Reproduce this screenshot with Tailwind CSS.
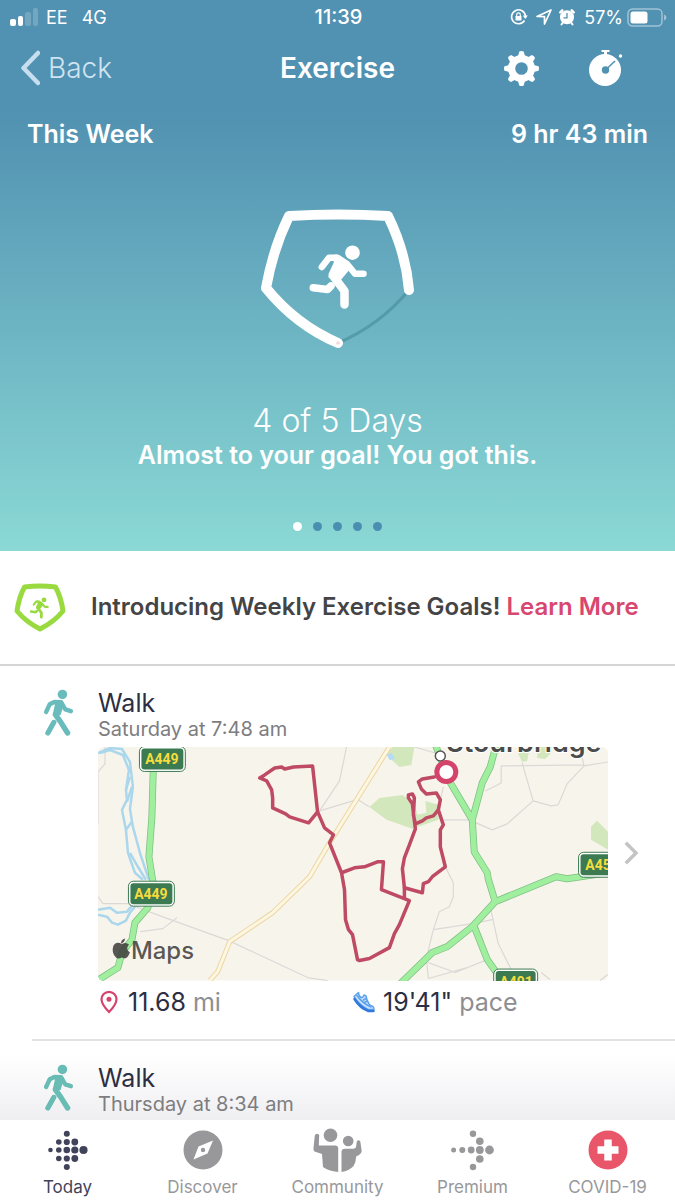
<!DOCTYPE html>
<html lang="en">
<head>
    <meta charset="UTF-8">
    <meta name="viewport" content="width=device-width, initial-scale=1.0">
    <title>Exercise</title>
    <script src="https://cdn.jsdelivr.net/npm/@tailwindcss/browser@4"></script>
</head>
<body class="min-h-screen flex flex-col bg-white font-['Inter',sans-serif] text-[#2c2e42] overflow-x-hidden">

    <!-- Shared shapes -->
    <svg class="hidden" aria-hidden="true">
        <symbol id="runner" viewBox="0 0 60 66">
            <circle cx="43.500" cy="8.700" r="7.300" fill="currentColor"/>
            <path d="M20 11.500 28 10.500 38 18 41 25 31 37 26 38 19.500 33.500 19.500 30 25 18Z" fill="currentColor"/>
            <g fill="none" stroke="currentColor" stroke-linecap="round" stroke-linejoin="round">
                <path d="M12.800 23 20 13.800H28.500L38 20 46 29.800H54.500" stroke-width="6.500"/>
                <path d="M4.300 43.800 18.500 45.500 22 42" stroke-width="7.500"/>
                <path d="M25 33 35.500 47V60.500" stroke-width="8.500"/>
            </g>
        </symbol>
        <symbol id="walker" viewBox="0 0 30 48">
            <circle cx="18.800" cy="7" r="4.600" fill="currentColor"/>
            <path d="M10 13 17 12.500 20.500 15.500 17 27 11 28 9.500 26 11.500 17Z" fill="currentColor"/>
            <g fill="none" stroke="currentColor" stroke-linecap="round" stroke-linejoin="round">
                <path d="M3 24 6.500 16.500 11 14.300 17.500 14.500 21.500 21.500 27 23.200" stroke-width="4.200"/>
                <path d="M12 26.500 17 33.500 23.800 44.300" stroke-width="5.200"/>
                <path d="M10.500 34 4.700 44.300" stroke-width="5"/>
            </g>
        </symbol>
    </svg>

    <header class="h-[551px] flex flex-col text-white bg-linear-to-b from-[#5191b1] from-20% to-[#8bd9d5]">
        <!-- Status bar -->
        <div class="h-[34px] grid grid-cols-3 items-center pl-[10px] pr-2 text-[18px]">
            <div class="flex items-center gap-2">
                <svg class="w-7 h-[18px]" viewBox="0 0 28 18" fill="#fff">
                    <rect x="0" y="11" width="6" height="7" rx="2"/>
                    <rect x="8" y="8" width="5" height="10" rx="2"/>
                    <rect x="15" y="4" width="6" height="14" rx="2" opacity=".2"/>
                    <rect x="23" y="0" width="5" height="18" rx="2" opacity=".2"/>
                </svg>
                <span>EE</span>
                <span class="pl-[6px]">4G</span>
            </div>
            <span class="text-center text-[20px] font-medium">11:39</span>
            <div class="flex items-center justify-end gap-1">
                <svg class="w-[18px] h-[18px] mr-1" viewBox="0 0 18 18" fill="none" stroke="#fff" stroke-width="1.600">
                    <path d="M14.500 12.500A7 7 0 1 1 15.500 8"/>
                    <path d="M12.800 7.500h5L15.300 11z" fill="#fff" stroke="none"/>
                    <rect x="5.500" y="8" width="6" height="4.500" rx=".6" fill="#fff" stroke="none"/>
                    <path d="M6.700 8V6.700a1.800 1.800 0 0 1 3.600 0V8" stroke-width="1.200"/>
                </svg>
                <svg class="w-4 h-4 mr-0.5" viewBox="0 0 16 16" fill="none" stroke="#fff" stroke-width="1.700" stroke-linejoin="round">
                    <path d="M1 7.500 15 1 8.500 15V7.700z"/>
                </svg>
                <svg class="w-[18px] h-[18px] mr-1" viewBox="0 0 18 18">
                    <circle cx="9" cy="9.200" r="7" fill="#fff"/>
                    <path d="M2.300 4.300 4.300 2.300M15.700 4.300 13.700 2.300" stroke="#fff" stroke-width="2.500" stroke-linecap="round"/>
                    <path d="M4.500 15 3.500 16.500M13.500 15 14.500 16.500" stroke="#fff" stroke-width="2" stroke-linecap="round"/>
                    <path d="M9 5v4.800H5.500" fill="none" stroke="#5191b1" stroke-width="1.300"/>
                </svg>
                <span>57%</span>
                <svg class="w-10 h-[19px]" viewBox="0 0 40 19">
                    <rect x="1" y="1" width="34" height="17" rx="4.500" fill="none" stroke="#fff" stroke-opacity=".45" stroke-width="1.500"/>
                    <rect x="3.500" y="3.500" width="17" height="12" rx="2.500" fill="#fff"/>
                    <path d="M37 6.500q2.500 1 2.500 3t-2.500 3z" fill="#fff" opacity=".45"/>
                </svg>
            </div>
        </div>

        <!-- Title bar -->
        <div class="h-[68px] grid grid-cols-3 items-center px-5 text-[28px]">
            <a href="#" class="flex items-center gap-2 font-light text-[#cfe4f1]">
                <svg class="w-5 h-9" viewBox="0 0 20 36" fill="none" stroke="#c6deee" stroke-width="4.500" stroke-linecap="round" stroke-linejoin="round">
                    <path d="M18 3 3.500 18 18 33"/>
                </svg>
                Back
            </a>
            <h1 class="text-center font-semibold">Exercise</h1>
            <div class="flex justify-end gap-[50px] pr-8">
                <button type="button" aria-label="Settings">
                    <svg class="w-[35px] h-[35px]" viewBox="-17.500 -17.500 35 35" fill="#fff">
                        <path d="M-3.600-12-2.200-17Q0-18 2.200-17L3.600-12V12L2.200 17Q0 18-2.200 17L-3.600 12Z"/>
                        <path d="M-3.600-12-2.200-17Q0-18 2.200-17L3.600-12V12L2.200 17Q0 18-2.200 17L-3.600 12Z" transform="rotate(45)"/>
                        <path d="M-3.600-12-2.200-17Q0-18 2.200-17L3.600-12V12L2.200 17Q0 18-2.200 17L-3.600 12Z" transform="rotate(90)"/>
                        <path d="M-3.600-12-2.200-17Q0-18 2.200-17L3.600-12V12L2.200 17Q0 18-2.200 17L-3.600 12Z" transform="rotate(135)"/>
                        <circle r="13.500"/>
                        <circle r="6.300" fill="#5191b1"/>
                    </svg>
                </button>
                <button type="button" aria-label="Stopwatch">
                    <svg class="w-[34px] h-9" viewBox="0 0 34 36">
                        <circle cx="16" cy="20" r="16" fill="#fff"/>
                        <path d="M12.500 0h8v2h-2.500v3h-3V2h-2.500z" fill="#fff"/>
                        <circle cx="31.500" cy="6" r="1.700" fill="#fff"/>
                        <circle cx="16.500" cy="20" r="3.700" fill="#5191b1"/>
                        <path d="M17 19.500 26 11" stroke="#5191b1" stroke-width="1.500"/>
                    </svg>
                </button>
            </div>
        </div>

        <div class="h-[66px] flex items-center justify-between px-[27px] text-[25px] font-semibold">
            <h2>This Week</h2>
            <span>9 hr 43 min</span>
        </div>

        <!-- Weekly goal -->
        <div class="flex-1 flex flex-col items-center pt-[41px]">
            <svg class="w-[154px] h-[140px]" viewBox="0 0 154 140" fill="none" stroke-linecap="round" stroke-linejoin="round">
                <path d="M148 81Q119 116 77 134" stroke="#3f8797" stroke-opacity=".55" stroke-width="3"/>
                <path d="M148 81Q145 44 127 7 77 4 28 7 12 40 5 79 35 116 77 134" stroke="#fff" stroke-width="10"/>
                <circle cx="77" cy="134" r="1.800" fill="#f5d9da"/>
                <svg x="48" y="35" width="60" height="66"><use href="#runner"/></svg>
            </svg>
            <p class="mt-[54px] text-[32px] leading-9 font-light">4 of 5 Days</p>
            <p class="text-[25px] leading-8 font-semibold">Almost to your goal! You got this.</p>
            <div class="mt-[51px] flex gap-[11px]">
                <span class="size-[9px] rounded-full bg-white"></span>
                <span class="size-[9px] rounded-full bg-[#4a8fb2]"></span>
                <span class="size-[9px] rounded-full bg-[#4a8fb2]"></span>
                <span class="size-[9px] rounded-full bg-[#4a8fb2]"></span>
                <span class="size-[9px] rounded-full bg-[#4a8fb2]"></span>
            </div>
        </div>
    </header>

    <!-- Announcement -->
    <section class="h-[115px] flex items-center gap-[25px] px-[14px] border-b-2 border-[#d5d5d7]">
        <svg class="w-[52px] h-[50px] shrink-0 text-[#98da3f]" viewBox="0 0 52 50" fill="none">
            <path d="M10.500 4Q26 2 41.500 4 47 14 49 28 40 39 26 46 12 39 3 28 5 14 10.500 4Z" stroke="currentColor" stroke-width="5" stroke-linejoin="round"/>
            <svg x="15.500" y="14" width="20" height="22"><use href="#runner"/></svg>
        </svg>
        <p class="pb-0.5 text-[24px] font-semibold text-[#444446]">Introducing Weekly Exercise Goals! <a href="#" class="text-[#d8476f]">Learn More</a></p>
    </section>

    <main class="flex-1 flex flex-col">
        <article class="flex pl-[43px] pt-[21px] pb-[19px]">
            <svg class="w-[31px] h-[50px] shrink-0 text-[#69bcbb]"><use href="#walker"/></svg>
            <div class="flex-1 min-w-0 pl-6">
                <h3 class="text-[25px] leading-8">Walk</h3>
                <p class="text-[20px] leading-5 text-[#7d7d7f]">Saturday at 7:48 am</p>
                <!-- Route map -->
                <svg class="mt-2 w-full rounded-md" viewBox="0 0 511 234" fill="none" stroke-linejoin="round">
                    <rect width="511" height="234" fill="#f7f4ec"/>
                    <g fill="#d3e7bd">
                        <path d="M272 60 282 51 305 48 317 56 320 68 329 66 328 54 342 58 341 73 315 82 289 73Z"/>
                        <path d="M289 8 295 0H317L314 18 302 20Z"/>
                        <path d="M421 7 424 4H432L430 14 425 15ZM441 0H454V6L448 12 440 11Z"/>
                        <path d="M494 80 500 74 511 85V103L494 93Z"/>
                    </g>
                    <path d="M289 7 294 6 298 12 292 13Z" fill="#b5dcf2"/>
                    <g stroke="#dcd8d6" stroke-width="1.200">
                        <path d="M0 77V25L7 17V0M0 150 5 157H30L67 171 131 194 210 231 230 234M79 171 65 182 42 185M249 0 242 34 222 64 262 52"/>
                        <path d="M258 51 272 60M346 73H372L395 83 410 77 436 54 425 16M436 54 454 59 461 58 470 37 487 19 511 15M487 19 484 6M346 40 341 62M388 44 404 36V19L487 18M317 0 345 8"/>
                        <path d="M348 120 356 136V150L352 160 342 165 336 183 329 212 331 232M336 183 375 177 395 173M393 160 401 197 415 225M331 216 358 226 390 213M331 232 370 221M444 226 453 233M503 234 511 228"/>
                    </g>
                    <g stroke="#abd7ec" stroke-width="2.500">
                        <path d="M0 6 12 1 24 2 32 15 35 40 32 62 35 80 42 106 51 133M2 6 12 3 25 8 31 23 28 43 29 53 24 63 28 83 30 106 37 126 45 133"/>
                        <path d="M28 43 32 30M29 55 34 40M28 83 34 75M32 106 40 120 48 133"/>
                        <path d="M0 163 12 161 19 166 29 165 35 158M0 168 9 170 14 176 20 178 28 174 32 166 37 160"/>
                    </g>
                    <path d="M112 234 120 225 132 195 175 166 212 130 232 96 262 48 292 0" stroke="#ecd6a4" stroke-width="5"/>
                    <path d="M112 234 120 225 132 195 175 166 212 130 232 96 262 48 292 0" stroke="#fdf6e0" stroke-width="3"/>
                    <g stroke="#7fbf82" stroke-width="7">
                        <path d="M56 0 54 70 51 110 55 135 50 161 37 176 34 193 24 206 20 221 1 233"/>
                        <path d="M337-5 352 34 375 73 377 105 390 126 391 132 398 155 375 180 350 200 335 206 303 237M399-2 393 20 385 36 375 73M398 155 459 130 470 132 511 126M377 180 390 213 402 230"/>
                    </g>
                    <g stroke="#a0ef9f" stroke-width="5.500">
                        <path d="M56 0 54 70 51 110 55 135 50 161 37 176 34 193 24 206 20 221 1 233"/>
                        <path d="M337-5 352 34 375 73 377 105 390 126 391 132 398 155 375 180 350 200 335 206 303 237M399-2 393 20 385 36 375 73M398 155 459 130 470 132 511 126M377 180 390 213 402 230"/>
                    </g>
                    <text x="349" y="5" font-size="27" font-weight="600" fill="#4b4b4b" stroke="#fff" stroke-width="2" paint-order="stroke">Stourbridge</text>
                    <g stroke="#be4a64" stroke-width="3.500" stroke-linecap="round">
                        <path d="M162 31 167 28 177 21 184 20 187 22 196 20 215 19 220 65 211 76 192 70 188 67 175 61V51L174 43 169 34 162 31Z"/>
                        <path d="M220 65 227 81 236 88 232 96 244 126 247 143 248 173 251 183 255 188 260 213 262 214 272 212 292 201 297 187 302 178 312 154 284 143 286 115 280 115 267 120 257 121 244 126"/>
                        <path d="M307 151V141L305 122 307 111 312 98 318 82 316 66 315 57 311 51 311 48 315 47 317 51 316 68 318 77 325 74 329 71 336 69 341 63"/>
                        <path d="M307 141 325 146 326 137 331 135 335 130 348 120 343 100 343 83 346 78 341 63 343 53 339 46 329 47 324 42 321 35 325 32 337 30"/>
                    </g>
                    <circle cx="343" cy="9" r="5" fill="#fff" stroke="#555" stroke-width="1.500"/>
                    <circle cx="349" cy="25" r="9.500" fill="#fff" stroke="#d3436a" stroke-width="5"/>
                    <!-- Road signs -->
                    <g font-family="Roboto, sans-serif" font-size="14" font-weight="700" fill="#f6dc3d" text-anchor="middle">
                        <rect x="41.500" y="-.5" width="46" height="25" rx="5" fill="#fff" stroke="#3c7a51"/>
                        <rect x="43.500" y="1.500" width="42" height="21" rx="3" fill="#3c7a51"/>
                        <text x="64" y="17">A449</text>
                        <rect x="30.500" y="134.500" width="46" height="25" rx="5" fill="#fff" stroke="#3c7a51"/>
                        <rect x="32.500" y="136.500" width="42" height="21" rx="3" fill="#3c7a51"/>
                        <text x="53" y="152">A449</text>
                        <rect x="481.500" y="105.500" width="46" height="25" rx="5" fill="#fff" stroke="#3c7a51"/>
                        <rect x="483.500" y="107.500" width="42" height="21" rx="3" fill="#3c7a51"/>
                        <text x="505" y="123">A458</text>
                        <rect x="396.500" y="222.500" width="44" height="25" rx="5" fill="#fff" stroke="#3c7a51"/>
                        <rect x="398.500" y="224.500" width="40" height="21" rx="3" fill="#3c7a51"/>
                        <text x="419" y="240">A491</text>
                    </g>
                    <g fill="#3c3a38" fill-opacity=".85">
                        <path d="M24 197.500Q18 194 15.500 199 13 206 18 211 20 213 24 211 28 213 30 210L32 206Q27 203 31 198 28 195 24 197.500ZM23 197Q23 193 27 192 27 196 23 197Z"/>
                        <text x="33" y="212" font-size="24" font-weight="500">Maps</text>
                    </g>
                </svg>
                <div class="mt-[3px] grid grid-cols-2 text-[25px] leading-9">
                    <p class="flex items-center gap-2">
                        <svg class="w-[22px] h-6" viewBox="0 0 22 24" fill="none" stroke="#d5426d" stroke-width="2.200">
                            <path d="M11 22Q3.500 14.500 3.500 9.300A7.500 7.500 0 0 1 18.500 9.300Q18.500 14.500 11 22Z"/>
                            <circle cx="11" cy="9.300" r="2.500" fill="#d5426d" stroke="none"/>
                        </svg>
                        <span>11.68 <span class="text-[#8e8e91]">mi</span></span>
                    </p>
                    <p class="flex items-center gap-2">
                        <svg class="w-[22px] h-[22px]" viewBox="0 0 22 22" fill="none" stroke="#5ea2ee" stroke-width="1.500" stroke-linejoin="round" stroke-linecap="round">
                            <path d="M5.500 1.500 1 5.500Q6 14 15 18.500L21 18.500Q21 15 17.500 14.500 14.500 12 13 5L11 4Q10 7 8 6.500 5.500 5 5.500 1.500Z" fill="#cfe4fb"/>
                            <path d="M1.500 8Q7 17 15.500 20L20.500 20" stroke="#3379dc" stroke-width="2.500"/>
                            <path d="M4 4.500Q9 12 18 16M13 7.500 10.500 9M14 10 11.500 11.500"/>
                        </svg>
                        <span>19'41" <span class="text-[#8e8e91]">pace</span></span>
                    </p>
                </div>
            </div>
            <div class="w-[67px] shrink-0 self-center pl-4">
                <svg class="w-[15px] h-6" viewBox="0 0 15 24" fill="none" stroke="#c4c4c7" stroke-width="3.500" stroke-linecap="square">
                    <path d="M3 3 12 12 3 21"/>
                </svg>
            </div>
        </article>

        <article class="flex-1 bg-linear-to-b from-white from-20% to-[#efeff2]">
            <div class="ml-8 border-t-2 border-[#e2e2e4]"></div>
            <div class="flex pl-[43px] pt-[21px] pb-1">
                <svg class="w-[31px] h-[50px] shrink-0 text-[#69bcb4]"><use href="#walker"/></svg>
                <div class="pl-6">
                    <h3 class="text-[25px] leading-8">Walk</h3>
                    <p class="text-[20px] leading-5 text-[#7d7d7f]">Thursday at 8:34 am</p>
                </div>
            </div>
        </article>
    </main>

    <!-- Tab bar -->
    <nav class="sticky bottom-0 h-20 grid grid-cols-5 bg-white text-[17px] leading-6 text-[#98989b]">
        <a href="#" class="flex flex-col items-center gap-[3px] pt-2 text-[#41435a]">
            <svg class="h-11 w-11" viewBox="0 0 44 44" fill="currentColor">
                <circle cx="4.500" cy="22" r="2.300"/>
                <circle cx="12.800" cy="14" r="2.800"/><circle cx="12.800" cy="22" r="2.800"/><circle cx="12.800" cy="30.500" r="2.800"/>
                <circle cx="20.800" cy="5.800" r="3"/><circle cx="20.800" cy="14" r="3.100"/><circle cx="20.800" cy="22" r="3.300"/><circle cx="20.800" cy="30.500" r="3.100"/><circle cx="20.800" cy="39" r="3"/>
                <circle cx="28.800" cy="14" r="3.400"/><circle cx="28.800" cy="22" r="3.600"/><circle cx="28.800" cy="30.500" r="3.400"/>
                <circle cx="37.500" cy="22" r="4.100"/>
            </svg>
            Today
        </a>
        <a href="#" class="flex flex-col items-center gap-[3px] pt-2">
            <svg class="h-11 w-11" viewBox="0 0 44 44">
                <circle cx="22" cy="22" r="19.500" fill="currentColor"/>
                <path d="M32 12.500 26.500 25.500 12.500 31.500 17.500 18.500Z" fill="#fff"/>
                <circle cx="22" cy="22" r="2.200" fill="currentColor"/>
            </svg>
            Discover
        </a>
        <a href="#" class="flex flex-col items-center gap-[3px] pt-2">
            <svg class="h-11 w-[50px]" viewBox="0 0 50 44" fill="currentColor">
                <circle cx="17.500" cy="7.200" r="6.800"/>
                <path d="M1.800 7.500Q3.500 4.500 6.200 7L5.800 17.500H22Q25.200 17.500 25.200 20V44Q15 43 10 39L9 26 1.500 23.500Q.2 22.500.5 20Z"/>
                <circle cx="35.200" cy="13" r="5.300"/>
                <path d="M28.500 44V23Q29 20.800 32 20.800H40Q43 20.500 43.200 18L43.800 13.500Q45.500 11 47.300 13.500L48.700 23Q48.500 26 43.200 28.500 43 34 40.500 38 36 43 28.500 44Z"/>
            </svg>
            Community
        </a>
        <a href="#" class="flex flex-col items-center gap-[3px] pt-2">
            <svg class="h-11 w-11" viewBox="0 0 44 44" fill="currentColor">
                <circle cx="2.600" cy="22" r="2.500"/><circle cx="11.300" cy="22" r="3"/><circle cx="20.200" cy="22" r="3.400"/><circle cx="28.800" cy="22" r="3.900"/><circle cx="38.500" cy="22" r="4.400"/>
                <circle cx="22" cy="5.700" r="3.200"/><circle cx="28.800" cy="13.300" r="3.800"/><circle cx="28.800" cy="31" r="3.800"/><circle cx="22" cy="39" r="3.200"/>
            </svg>
            Premium
        </a>
        <a href="#" class="flex flex-col items-center gap-[3px] pt-2">
            <svg class="h-11 w-11" viewBox="0 0 44 44">
                <circle cx="22" cy="22" r="19.500" fill="#e9566a"/>
                <path d="M22 11.500V32.500M11.500 22H32.500" stroke="#fff" stroke-width="7.500"/>
            </svg>
            COVID-19
        </a>
    </nav>
</body>
</html>
